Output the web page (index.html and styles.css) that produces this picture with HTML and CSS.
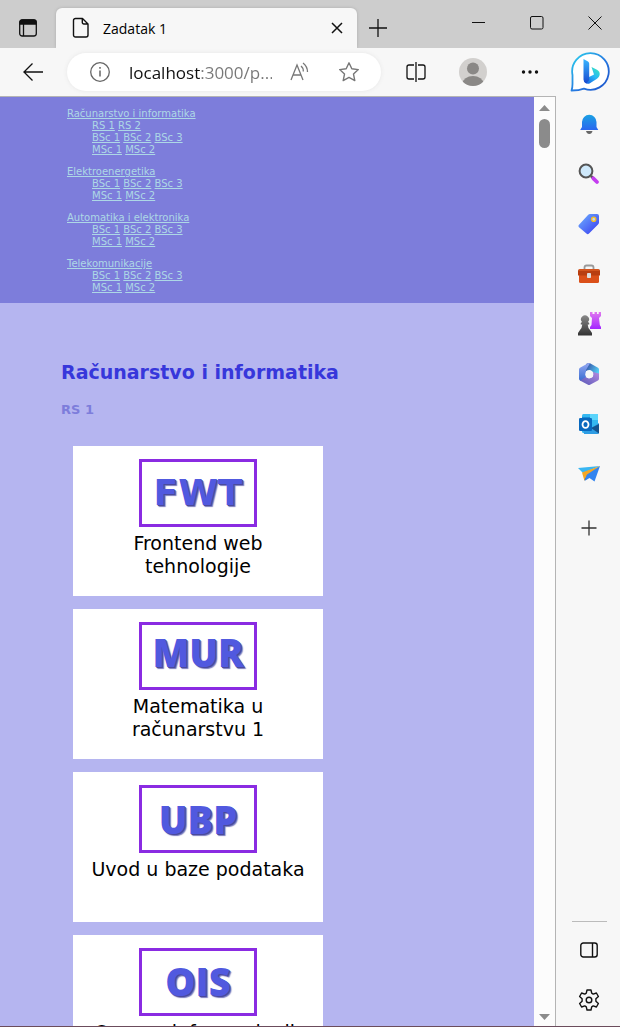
FILE: index.html
```html
<!DOCTYPE html>
<html lang="sr-Latn">
<head>
<meta charset="utf-8">
<title>Zadatak 1</title>
<link rel="stylesheet" href="styles.css">
</head>
<body>
<div class="browser">
  <header class="tabbar">
    <button class="icon-btn workspaces" aria-label="Tab actions">
      <svg width="20" height="20" viewBox="0 0 20 20" fill="none" stroke="#111" stroke-width="1.3"><rect x="1.7" y="2" width="16.6" height="16" rx="2.5"/><path d="M2 4.5a2.500 2.500 0 0 1 2.500-2.500h11a2.500 2.500 0 0 1 2.500 2.500V6H2z" fill="#111"/><path d="M5.500 6v12"/></svg>
    </button>
    <div class="tab">
      <svg width="18" height="22" viewBox="0 0 18 22" fill="none" stroke="#111" stroke-width="1.4" stroke-linejoin="round"><path d="M3.500 1.500h7L16 7v11a2 2 0 0 1-2 2H3.500a2 2 0 0 1-2-2v-14.500a2 2 0 0 1 2-2zM10.300 1.500V5.500a1.500 1.500 0 0 0 1.500 1.500H16"/></svg>
      <span class="tab-title">Zadatak 1</span>
      <button class="icon-btn tab-close" aria-label="Close tab"><svg width="12" height="12" viewBox="0 0 12 12" stroke="#111" stroke-width="1.5"><path d="M1 1l10 10M11 1L1 11"/></svg></button>
    </div>
    <button class="icon-btn new-tab" aria-label="New tab"><svg width="18" height="18" viewBox="0 0 18 18" stroke="#111" stroke-width="1.300"><path d="M9 0v18M0 9h18"/></svg></button>
    <div class="window-controls">
      <button class="icon-btn" aria-label="Minimize"><svg width="14" height="14" viewBox="0 0 14 14" stroke="#111"><path d="M0 6.500h13"/></svg></button>
      <button class="icon-btn" aria-label="Maximize"><svg width="14" height="14" viewBox="0 0 14 14" fill="none" stroke="#111"><rect x=".5" y=".5" width="12.500" height="12.500" rx="1.500"/></svg></button>
      <button class="icon-btn" aria-label="Close"><svg width="14" height="14" viewBox="0 0 14 14" stroke="#111"><path d="M.5.5l13 13M13.500.5l-13 13"/></svg></button>
    </div>
  </header>

  <div class="toolbar">
    <button class="icon-btn back" aria-label="Back"><svg width="22" height="20" viewBox="0 0 22 20" fill="none" stroke="#111" stroke-width="1.300"><path d="M21 10H1.500M10.500 1.500L2 10l8.500 8.500"/></svg></button>
    <div class="address">
      <svg width="22" height="22" viewBox="0 0 22 22" fill="none" stroke="#666" stroke-width="1.300"><circle cx="11" cy="11" r="9.300"/><path d="M11 9.500v6M11 6v1.700" stroke-width="1.500"/></svg>
      <input class="url" type="text" aria-label="Address" value="localhost:3000/p...">
      <button class="icon-btn" aria-label="Read aloud"><svg width="20" height="20" viewBox="0 0 20 20" fill="none" stroke="#777" stroke-width="1.300"><path d="M1 18L7 3l6 15M3.200 13h7.600M11 4q2.500 2 2.300 5.500M13 1q4.500 3.500 4.500 9"/></svg></button>
      <button class="icon-btn" aria-label="Favorite"><svg width="22" height="22" viewBox="0 0 22 22" fill="none" stroke="#777" stroke-width="1.400" stroke-linejoin="round"><path d="M11 1.800l2.800 6 6.500.8-4.800 4.500 1.300 6.500L11 16.400l-5.800 3.200 1.300-6.500L1.700 8.600l6.500-.8z"/></svg></button>
    </div>
    <button class="icon-btn split" aria-label="Split screen"><svg width="20" height="20" viewBox="0 0 20 20" fill="none" stroke="#111" stroke-width="1.300"><path d="M10 0v20M8 3H3a2 2 0 0 0-2 2v10a2 2 0 0 0 2 2h5M12 3h5a2 2 0 0 1 2 2v10a2 2 0 0 1-2 2h-5"/></svg></button>
    <button class="icon-btn profile" aria-label="Profile"><svg width="28" height="28" viewBox="0 0 28 28"><defs><clipPath id="avatar"><circle cx="14" cy="14" r="14"/></clipPath></defs><circle cx="14" cy="14" r="14" fill="#d2d0ce"/><g clip-path="url(#avatar)" fill="#8a8886"><circle cx="14" cy="10.500" r="6"/><ellipse cx="14" cy="25.500" rx="10.500" ry="7.500"/></g></svg></button>
    <button class="icon-btn more" aria-label="More"><svg width="18" height="6" viewBox="0 0 18 6" fill="#111"><circle cx="2.500" cy="3" r="1.700"/><circle cx="9" cy="3" r="1.700"/><circle cx="15.500" cy="3" r="1.700"/></svg></button>
    <button class="icon-btn bing" aria-label="Bing"><svg width="40" height="40" viewBox="0 0 40 40"><defs><linearGradient id="bubble" x1="0" y1="0" x2="1" y2="1"><stop offset="0" stop-color="#2cd3ee"/><stop offset=".55" stop-color="#2678e0"/><stop offset="1" stop-color="#1b50c8"/></linearGradient><linearGradient id="stem" x2="0" y2="1"><stop stop-color="#38b6ff"/><stop offset="1" stop-color="#1748cf"/></linearGradient><linearGradient id="bowl" x1="0" y1="1" x2=".7" y2="0"><stop stop-color="#1556df"/><stop offset=".6" stop-color="#28b9f5"/><stop offset="1" stop-color="#35dfc6"/></linearGradient></defs><path d="M1.500 38.500Q2.500 36 2.500 32V23A18.300 18.300 0 1 1 14 36.600Q9 38.500 1.500 38.500z" fill="#fff" stroke="url(#bubble)" stroke-width="1.800" stroke-linejoin="round"/><path d="M21.500 15l5.500 2.800c4 2 3.300 7 0 9l-7.500 4.700c-3 1-5.500-1-5.500-4l10-5z" fill="url(#bowl)"/><path d="M13.500 7l4.500 2.500q1.200.8 1.200 2V28l-3 3.500q-2.700-1-2.700-4z" fill="url(#stem)"/></svg></button>
  </div>

  <div class="workspace">
    <div class="viewport">
      <main class="page">
        <nav class="menu">
          <section><a href="#ri">Računarstvo i informatika</a><div class="years"><p><a href="#">RS 1</a> <a href="#">RS 2</a></p><p><a href="#">BSc 1</a> <a href="#">BSc 2</a> <a href="#">BSc 3</a></p><p><a href="#">MSc 1</a> <a href="#">MSc 2</a></p></div></section>
          <section><a href="#">Elektroenergetika</a><div class="years"><p><a href="#">BSc 1</a> <a href="#">BSc 2</a> <a href="#">BSc 3</a></p><p><a href="#">MSc 1</a> <a href="#">MSc 2</a></p></div></section>
          <section><a href="#">Automatika i elektronika</a><div class="years"><p><a href="#">BSc 1</a> <a href="#">BSc 2</a> <a href="#">BSc 3</a></p><p><a href="#">MSc 1</a> <a href="#">MSc 2</a></p></div></section>
          <section><a href="#">Telekomunikacije</a><div class="years"><p><a href="#">BSc 1</a> <a href="#">BSc 2</a> <a href="#">BSc 3</a></p><p><a href="#">MSc 1</a> <a href="#">MSc 2</a></p></div></section>
        </nav>
        <section class="courses">
          <h2 id="ri">Računarstvo i informatika</h2>
          <h3>RS 1</h3>
          <div class="cards">
            <article class="card"><div class="logo wide">FWT</div><p>Frontend web tehnologije</p></article>
            <article class="card"><div class="logo high">MUR</div><p>Matematika u računarstvu 1</p></article>
            <article class="card"><div class="logo low">UBP</div><p>Uvod u baze podataka</p></article>
            <article class="card"><div class="logo">OIS</div><p>Osnove informacionih sistema</p></article>
          </div>
        </section>
      </main>
      <div class="scrollbar" aria-hidden="true">
        <svg width="11" height="6" viewBox="0 0 11 6" fill="#8b8b8b"><path d="M5.500 0L11 6H0z"/></svg>
        <div class="thumb"></div>
        <svg width="11" height="6" viewBox="0 0 11 6" fill="#8b8b8b"><path d="M5.500 6L11 0H0z"/></svg>
      </div>
    </div>

    <aside class="sidebar">
      <button class="icon-btn" aria-label="Notifications"><svg width="22" height="22" viewBox="0 0 22 22"><defs><linearGradient id="bell" x2="0" y2="1"><stop stop-color="#1ba1e3"/><stop offset="1" stop-color="#2a66ef"/></linearGradient></defs><path d="M8 18h6.500q-.7 3-3.200 3T8 18z" fill="#666"/><path d="M4 9a7.200 7.200 0 0 1 14.500 0v5l1.800 3H2.200L4 14z" fill="url(#bell)"/></svg></button>
      <button class="icon-btn" aria-label="Search"><svg width="22" height="22" viewBox="0 0 22 22"><path d="M13 13l2 2" stroke="#555" stroke-width="2.500"/><path d="M15.300 15.300l3.700 3.700" stroke="#c43df0" stroke-width="3.800" stroke-linecap="round"/><circle cx="8" cy="8" r="6.400" fill="#cfe9fb" stroke="#555" stroke-width="2"/></svg></button>
      <button class="icon-btn" aria-label="Shopping"><svg width="22" height="22" viewBox="0 0 22 22"><defs><linearGradient id="tag" x2="1" y2="1"><stop stop-color="#70b4ff"/><stop offset="1" stop-color="#3737ef"/></linearGradient></defs><path d="M12 1h7q2 0 2 2v6.500q0 1-1 2l-9 9q-1.300 1.300-2.600 0L1 14.200q-1.200-1.200 0-2.500L10 2q1-1 2-1z" fill="url(#tag)"/><circle cx="15.700" cy="6.300" r="2.100" fill="#c4d6f8" stroke="#f4bd27" stroke-width="1.400"/></svg></button>
      <button class="icon-btn" aria-label="Tools"><svg width="24" height="22" viewBox="0 0 24 22"><path d="M7.500 7V4.500q0-2 2-2h5q2 0 2 2V7" fill="none" stroke="#999" stroke-width="1.800"/><rect x="2" y="11" width="20" height="9" rx="1.500" fill="#db5019"/><path d="M1 8q0-2 2-2h18q2 0 2 2v4.500H1z" fill="#b83e10"/><path d="M2 7h20" stroke="#ee6a2b"/><rect x="10" y="10" width="4" height="5" rx=".8" fill="#ddd"/></svg></button>
      <button class="icon-btn" aria-label="Games"><svg width="24" height="24" viewBox="0 0 24 24"><defs><linearGradient id="rook" x2="0" y2="1"><stop stop-color="#e078ef"/><stop offset="1" stop-color="#a326ff"/></linearGradient><linearGradient id="pawn" x2="0" y2="1"><stop stop-color="#888"/><stop offset="1" stop-color="#333"/></linearGradient></defs><path d="M13 0h2.500v2h2V0h2.500v2h1.700V0H24v4l-2 2 .8 7 1.200 2v2H13v-2l1.500-2L15 6l-2-2z" fill="url(#rook)"/><path d="M5 10a4 4 0 1 1 6 0l1.200 1v1.500h-1.500q.2 3.500 2.300 5.500l2 3v2.500H1V21l2-3q2-2 2.300-5.500H3.800V11z" fill="url(#pawn)"/></svg></button>
      <button class="icon-btn" aria-label="Microsoft 365"><svg width="22" height="22" viewBox="0 0 22 22"><defs><linearGradient id="m365a" x1="0" x2="1" y2=".6"><stop stop-color="#31449f"/><stop offset="1" stop-color="#57d3f7"/></linearGradient><linearGradient id="m365b" x2="0" y2="1"><stop stop-color="#94a8f2"/><stop offset="1" stop-color="#386bd0"/></linearGradient><linearGradient id="m365c" x2="1" y1="1" y2="0"><stop stop-color="#5959b8"/><stop offset="1" stop-color="#b58be0"/></linearGradient></defs><path d="M8 1l2-.8q1-.4 2 .1l8 4.500q1 .6 1 1.700V14l-6-4-3-3-4 1z" fill="url(#m365a)"/><path d="M12 .3L8 7v7.500L3 18l-1-.6q-1-.6-1-1.700V6.500q0-1.100 1-1.700L10 .3q1-.5 2 0z" fill="url(#m365b)"/><path d="M21 10.500v5.200q0 1.100-1 1.700l-8 4.300q-1 .5-2 0l-8-4.300 6-3.400 3 1.500 4-2V9z" fill="url(#m365c)"/><circle cx="11.300" cy="11.300" r="4" fill="#f7f7f7"/></svg></button>
      <button class="icon-btn" aria-label="Outlook"><svg width="22" height="22" viewBox="0 0 22 22"><rect x="4" y="1" width="16" height="19" rx="1.500" fill="#35b8f1"/><path d="M12 1h8v6h-8z" fill="#5bd4fb"/><path d="M4 4h8v8H4z" fill="#168bd5"/><path d="M5 12l8 3 8-5v9.500q0 1.500-1.500 1.500H6z" fill="#2e9de4"/><path d="M21 11v9.500L13 15z" fill="#14538f"/><rect x="1" y="5" width="13" height="13" rx="1.300" fill="#0868be"/><ellipse cx="7.500" cy="11.500" rx="3" ry="3.400" fill="none" stroke="#fff" stroke-width="1.800"/></svg></button>
      <button class="icon-btn" aria-label="Drop"><svg width="22" height="22" viewBox="0 0 22 22"><path d="M0 5L22 3 5 10z" fill="#39b6f2"/><path d="M4 9.500L22 3 8 14l-1.500 4z" fill="#f5a623"/><path d="M6.500 17L9 12l-1 5z" fill="#254f9d"/><path d="M9 11.500L22 3l-5.500 15.500-5-3.500-5 3z" fill="#3284ef"/></svg></button>
      <button class="icon-btn add" aria-label="Add"><svg width="16" height="16" viewBox="0 0 16 16" stroke="#333" stroke-width="1.300"><path d="M8 .5v15M.5 8h15"/></svg></button>
      <hr>
      <button class="icon-btn" aria-label="Toggle sidebar"><svg width="18" height="16" viewBox="0 0 18 16" fill="none" stroke="#111" stroke-width="1.400"><rect x=".8" y="1" width="16.400" height="14" rx="2.500"/><path d="M12.500 1v14"/></svg></button>
      <button class="icon-btn" aria-label="Settings"><svg width="22" height="22" viewBox="0 0 22 22" fill="none" stroke="#111" stroke-width="1.400" stroke-linejoin="round"><path d="M9 1h4l.7 3.200 1.500.9 3.200-1.100 2 3.500-2.500 2.200v2.600l2.500 2.200-2 3.500-3.200-1.100-1.500.9L13 21H9l-.7-3.200-1.500-.9L3.600 18l-2-3.500 2.500-2.200V9.700L1.600 7.500l2-3.500 3.200 1.100 1.500-.9z"/><circle cx="11" cy="11" r="2.800"/></svg></button>
    </aside>
  </div>
</div>
</body>
</html>
```
FILE: styles.css
```css
* { box-sizing: border-box; }
body { margin: 0; }
p, h2, h3 { margin: 0; }

.browser {
  display: flex;
  flex-direction: column;
  height: 100vh;
  overflow: hidden;
  background: #f7f7f7;
  border-bottom: 1px solid #6b4c5c;
  font-family: "Segoe UI", "Open Sans", sans-serif;
}
.icon-btn {
  display: flex;
  align-items: center;
  justify-content: center;
  padding: 0;
  border: 0;
  background: none;
}
svg { display: block; flex: none; }

.tabbar {
  display: flex;
  flex: none;
  height: 48px;
  background: #cdcdcd;
}
.workspaces { width: 56px; padding-top: 8px; }
.tab {
  display: flex;
  flex: 0 1 301px;
  align-items: center;
  gap: 13px;
  margin-top: 8px;
  padding: 0 14px 0 16px;
  border-radius: 6px 6px 0 0;
  background: #f7f7f7;
  box-shadow: 0 0 3px #aaa;
}
.tab-title { flex: 1; font-size: 14px; }
.new-tab { width: 42px; padding-top: 7px; }
.window-controls {
  display: flex;
  flex: 1;
  justify-content: flex-end;
  gap: 44px;
  padding: 0 18px 2px 0;
}

.toolbar {
  display: flex;
  flex: none;
  align-items: center;
  height: 48px;
  padding: 0 10px 0 22px;
  background: #f7f7f7;
  position: relative;
}
.back { margin-right: 23px; }
.address {
  display: flex;
  flex: 1;
  align-items: center;
  gap: 18px;
  min-width: 0;
  height: 38px;
  padding: 0 21px 0 22px;
  border-radius: 19px;
  background: #fff;
  box-shadow: 0 0 4px #e6e6e6;
}
.url {
  flex: 1;
  min-width: 0;
  padding: 0;
  border: 0;
  outline: 0;
  background: linear-gradient(to right, #111 71px, #777 71px);
  background-clip: text;
  color: transparent;
  font: 17px "Segoe UI", "Open Sans", sans-serif;
}
.address .icon-btn + .icon-btn { margin-left: 10px; }
.split { margin-left: 25px; }
.profile { margin-left: 33px; }
.more { margin-left: 34px; }
.bing { margin-left: 31px; }

.workspace { display: flex; flex: 1; min-height: 0; }
.viewport {
  display: flex;
  flex: 1;
  min-width: 0;
  border-top: 1px solid #b4b4b4;
  border-right: 1px solid #b4b4b4;
}
.page {
  flex: 1;
  overflow: hidden;
  background: #b5b5f0;
  font-family: Verdana, "DejaVu Sans", sans-serif;
}
.menu {
  display: flex;
  flex-direction: column;
  gap: 10px;
  padding: 11px 67px 9px;
  background: #7d7ddb;
  font-size: 10px;
  line-height: 12px;
}
.menu section { display: flow-root; }
.menu section > a { display: table; }
.menu a { color: #add8e6; }
.years { padding-left: 25px; }

.courses { padding: 56px 61px 0; }
.courses h2 { color: #3737db; font-size: 19px; line-height: 26px; }
.courses h3 { margin-top: 17px; color: #7d7ddb; font-size: 13px; line-height: 16px; }
.cards {
  display: flex;
  flex-direction: column;
  gap: 13px;
  padding: 28px 12px 0;
}
.card {
  display: flex;
  flex-direction: column;
  align-items: center;
  gap: 5px;
  width: 250px;
  height: 150px;
  padding: 13px 12px 0;
  background: #fff;
  font-size: 19px;
  line-height: 23px;
  text-align: center;
}
.card p { max-width: 220px; }
.logo {
  flex: none;
  width: 118px;
  height: 68px;
  border: 3px solid #8a2be2;
  color: #5159df;
  font: 800 38px/60px "Open Sans", sans-serif;
  text-shadow: 1px 1px 0 #4a4a9c, 2px 2px 1px #7a7abc;
}
.logo.wide { font: bold 36px/62px "DejaVu Sans", sans-serif; }
.logo.high { line-height: 54px; }
.logo.low { line-height: 62px; }

.scrollbar {
  display: flex;
  flex: none;
  flex-direction: column;
  align-items: center;
  width: 21px;
  padding: 8px 0 6px;
  background: #fcfcfc;
}
.thumb {
  width: 11px;
  height: 29px;
  margin: 8px 0 auto;
  border-radius: 6px;
  background: #8b8b8b;
}

.sidebar {
  display: flex;
  flex: none;
  flex-direction: column;
  align-items: center;
  width: 64px;
  padding: 3px 0 1px 2px;
}
.sidebar .icon-btn { width: 48px; height: 50px; }
.sidebar .add { height: 58px; }
.sidebar hr {
  width: 35px;
  margin: auto 0 3px;
  border: 0;
  border-top: 1px solid #bbb;
}
```
